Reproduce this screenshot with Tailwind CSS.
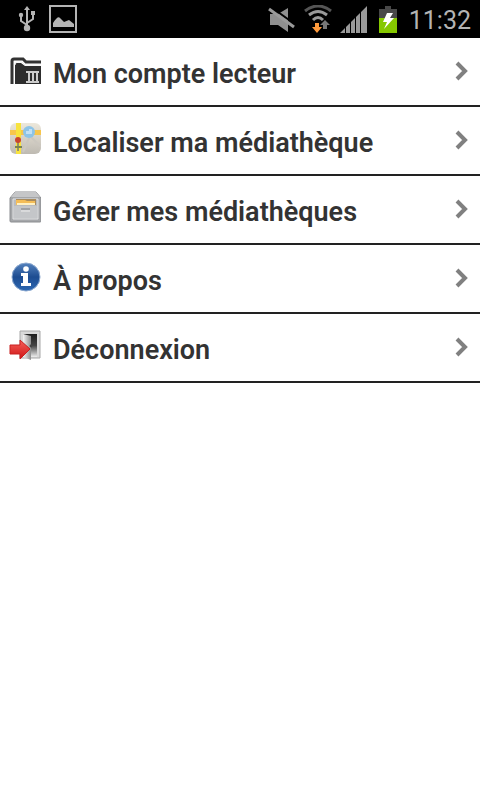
<!DOCTYPE html>
<html lang="fr">
<head>
    <meta charset="UTF-8">
    <meta name="viewport" content="width=device-width, initial-scale=1.0">
    <title>Médiathèque</title>
    <script src="https://cdn.jsdelivr.net/npm/@tailwindcss/browser@4"></script>
</head>
<body class="bg-white min-h-screen font-['Roboto',sans-serif]">
    <!-- Status bar -->
    <header class="h-[38px] bg-black text-[#b4b4b4] flex items-center justify-between pl-4 pr-[9px]">
        <div class="flex items-center gap-3">
            <svg class="w-[21px] h-[26px]" viewBox="0 0 21 26" fill="none" stroke="currentColor" stroke-width="2">
                <path d="M11 20V4M11 19L5 15V10M11 17L17 13V8"/>
                <path d="M11 0L14 4H8Z" fill="currentColor" stroke="none"/>
                <circle cx="11" cy="22" r="3.2" fill="currentColor" stroke="none"/>
                <circle cx="5" cy="9" r="2.2" fill="currentColor" stroke="none"/>
                <path d="M15 5h4v4h-4z" fill="currentColor" stroke="none"/>
            </svg>
            <svg class="w-7 h-7" viewBox="0 0 28 28" fill="none">
                <rect x="1" y="1" width="26" height="26" stroke="currentColor" stroke-width="2"/>
                <path d="M4 22V18Q9 10 11 13L15 17L20 15L25 19V22Z" fill="currentColor"/>
            </svg>
        </div>
        <div class="flex items-center">
            <svg class="w-7 h-7" viewBox="0 0 28 28" fill="#8f8f8f">
                <path d="M2 9H10L20 3V27L10 20H2Z"/>
                <path d="M3 2L28 20" stroke="#000" stroke-width="2"/>
                <path d="M1 4L26 22" stroke="#9a9a9a" stroke-width="3"/>
            </svg>
            <svg class="w-7 h-7 ml-2" viewBox="0 0 28 28" fill="none">
                <path d="M1 6Q14 -4 27 6" stroke="#555" stroke-width="3"/>
                <path d="M5 10Q14 3 23 10" stroke="#999" stroke-width="3"/>
                <path d="M9 15Q14 10 19 15" stroke="#999" stroke-width="3"/>
                <path d="M11 18H15V22H18L13 28L8 22H11Z" fill="#ff9a3c"/>
                <path d="M19 24V20H16L21 15L26 20H23V24Z" fill="#777"/>
            </svg>
            <svg class="w-7 h-7 ml-2" viewBox="0 0 28 28" fill="#999">
                <path d="M0 28L5 23V28ZM6 28V22L10 18V28ZM11 28V17L15 13V28ZM16 28V12L20 8V28ZM21 28V7L27 1V28Z"/>
            </svg>
            <svg class="w-[18px] h-7 ml-[11px]" viewBox="0 0 18 28">
                <path d="M0 4H6V1H12V4H18V13H0Z" fill="#484848"/>
                <path d="M0 13H18V28H0Z" fill="#86c800"/>
                <path d="M8 8H14L11 13H15L5 24L8 17H4Z" fill="#fff"/>
            </svg>
            <span class="ml-3 mt-[3px] text-[25px] leading-8">11:32</span>
        </div>
    </header>

    <!-- Menu -->
    <nav>
        <ul>
            <li>
                <a href="#" class="flex items-center h-[69px] pl-[9px] pr-[11px] border-b-2 border-[#222] text-[#333]">
                    <svg class="w-8 h-8 mb-[5px]" viewBox="0 0 32 32">
                        <path d="M3 31V8Q3 6 5 6H14L17 9H32" fill="none" stroke="#333" stroke-width="3"/>
                        <path d="M6 31V12Q6 10 8 10H12L16 13H32V31Z" fill="#2d2d2d"/>
                        <path d="M6 12Q6 9 8 9H13L16 12H32" fill="none" stroke="#eee"/>
                        <path d="M17 20V18H30V20ZM19 20H21V28H19ZM23 20H25V28H23ZM27 20H29V28H27ZM17 28H30V30H17Z" fill="#ccc"/>
                    </svg>
                    <span class="ml-3 mt-1 flex-1 text-[27px] leading-8 font-semibold">Mon compte lecteur</span>
                    <svg class="w-[14px] h-5 mb-[2px]" viewBox="0 0 14 20" fill="none" stroke="#808080" stroke-width="4"><path d="M2 2L10 10L2 18"/></svg>
                </a>
            </li>
            <li>
                <a href="#" class="flex items-center h-[69px] pl-[9px] pr-[11px] border-b-2 border-[#222] text-[#333]">
                    <svg class="w-8 h-8 mb-[5px]" viewBox="0 0 32 32">
                        <defs>
                            <clipPath id="map-shape"><rect x="1" y="1" width="31" height="31" rx="6"/></clipPath>
                            <linearGradient id="map-ground" x2="0" y2="1"><stop stop-color="#eee9dc"/><stop offset="1" stop-color="#bebab2"/></linearGradient>
                        </defs>
                        <g clip-path="url(#map-shape)">
                            <path d="M0 0H32V32H0Z" fill="url(#map-ground)"/>
                            <path d="M0 8H32V13H0Z" fill="#f7c64d"/>
                            <path d="M7 0H12V32H7Z" fill="#f8e33e"/>
                            <path d="M14 30L21 14L32 25" fill="none" stroke="#ccc8c0" stroke-width="2"/>
                            <circle cx="20" cy="10" r="6" fill="#8dc4e8"/>
                            <path d="M17 12V9H20V7H23V12Z" fill="#c2e0f4"/>
                            <path d="M9 20V29" stroke="#777" stroke-width="1.5"/>
                            <circle cx="9" cy="18" r="3" fill="#c9452f"/>
                            <path d="M6 25H13" stroke="#7a8450" stroke-width="2"/>
                        </g>
                    </svg>
                    <span class="ml-3 mt-1 flex-1 text-[27px] leading-8 font-semibold">Localiser ma médiathèque</span>
                    <svg class="w-[14px] h-5 mb-[2px]" viewBox="0 0 14 20" fill="none" stroke="#808080" stroke-width="4"><path d="M2 2L10 10L2 18"/></svg>
                </a>
            </li>
            <li>
                <a href="#" class="flex items-center h-[69px] pl-[9px] pr-[11px] border-b-2 border-[#222] text-[#333]">
                    <svg class="w-8 h-8 mb-[5px]" viewBox="0 0 32 32">
                        <path d="M6 1H27L32 7V30Q32 31 31 31H2Q1 31 1 30V7Z" fill="#a5a7aa" stroke="#8b8d90"/>
                        <path d="M6 1H27L31 6H2Z" fill="#c5c6c8"/>
                        <path d="M4 8H29V28H4Z" fill="#b9bbbe" stroke="#e1e2e4"/>
                        <path d="M7 8H27V14H7Z" fill="#a98b5c"/>
                        <path d="M7 9H16L18 10H26V14H7Z" fill="#f4bd58"/>
                        <path d="M8 12H26V14H8Z" fill="#fff0c2"/>
                        <path d="M5 15H28V27H5Z" fill="#c4c6c9"/>
                        <path d="M12 17H21V19H12Z" fill="#a0a2a5"/>
                        <path d="M12 20H21" stroke="#eee"/>
                    </svg>
                    <span class="ml-3 mt-1 flex-1 text-[27px] leading-8 font-semibold">Gérer mes médiathèques</span>
                    <svg class="w-[14px] h-5 mb-[2px]" viewBox="0 0 14 20" fill="none" stroke="#808080" stroke-width="4"><path d="M2 2L10 10L2 18"/></svg>
                </a>
            </li>
            <li>
                <a href="#" class="flex items-center h-[69px] pl-[9px] pr-[11px] border-b-2 border-[#222] text-[#333]">
                    <svg class="w-8 h-8 mb-[5px]" viewBox="0 0 32 32">
                        <defs>
                            <linearGradient id="info-blue" x2="0" y2="1"><stop stop-color="#5482bd"/><stop offset=".5" stop-color="#1d4c91"/><stop offset="1" stop-color="#2d68b2"/></linearGradient>
                        </defs>
                        <circle cx="17" cy="17" r="14" fill="url(#info-blue)" stroke="#8ba8cf"/>
                        <circle cx="17" cy="9" r="2.8" fill="#fff"/>
                        <path d="M12 13H19V23H22V26H12V23H14V16H12Z" fill="#fff"/>
                    </svg>
                    <span class="ml-3 mt-1 flex-1 text-[27px] leading-8 font-semibold">À propos</span>
                    <svg class="w-[14px] h-5 mb-[2px]" viewBox="0 0 14 20" fill="none" stroke="#808080" stroke-width="4"><path d="M2 2L10 10L2 18"/></svg>
                </a>
            </li>
            <li>
                <a href="#" class="flex items-center h-[69px] pl-[9px] pr-[11px] border-b-2 border-[#222] text-[#333]">
                    <svg class="w-8 h-8 mb-[5px]" viewBox="0 0 32 32">
                        <defs>
                            <linearGradient id="exit-red" x2="0" y2="1"><stop stop-color="#f5605a"/><stop offset="1" stop-color="#cf1414"/></linearGradient>
                            <linearGradient id="exit-door"><stop stop-color="#f4f4f4"/><stop offset="1" stop-color="#8c8c8c"/></linearGradient>
                            <linearGradient id="exit-room" x2="0" y2="1"><stop stop-color="#1c1c1c"/><stop offset=".5" stop-color="#444"/><stop offset="1" stop-color="#eee"/></linearGradient>
                        </defs>
                        <path d="M11 2H31V29H11Z" fill="#d9d9d9" stroke="#a8a8a8"/>
                        <path d="M14 5H28V28H14Z" fill="url(#exit-room)"/>
                        <path d="M14 5L22 7V31L14 28Z" fill="url(#exit-door)"/>
                        <circle cx="22" cy="17" r="1.4" fill="#444"/>
                        <path d="M1 16H11V11L21 20L11 30V25H1Z" fill="url(#exit-red)" stroke="#c92020"/>
                    </svg>
                    <span class="ml-3 mt-1 flex-1 text-[27px] leading-8 font-semibold">Déconnexion</span>
                    <svg class="w-[14px] h-5 mb-[2px]" viewBox="0 0 14 20" fill="none" stroke="#808080" stroke-width="4"><path d="M2 2L10 10L2 18"/></svg>
                </a>
            </li>
        </ul>
    </nav>
</body>
</html>
